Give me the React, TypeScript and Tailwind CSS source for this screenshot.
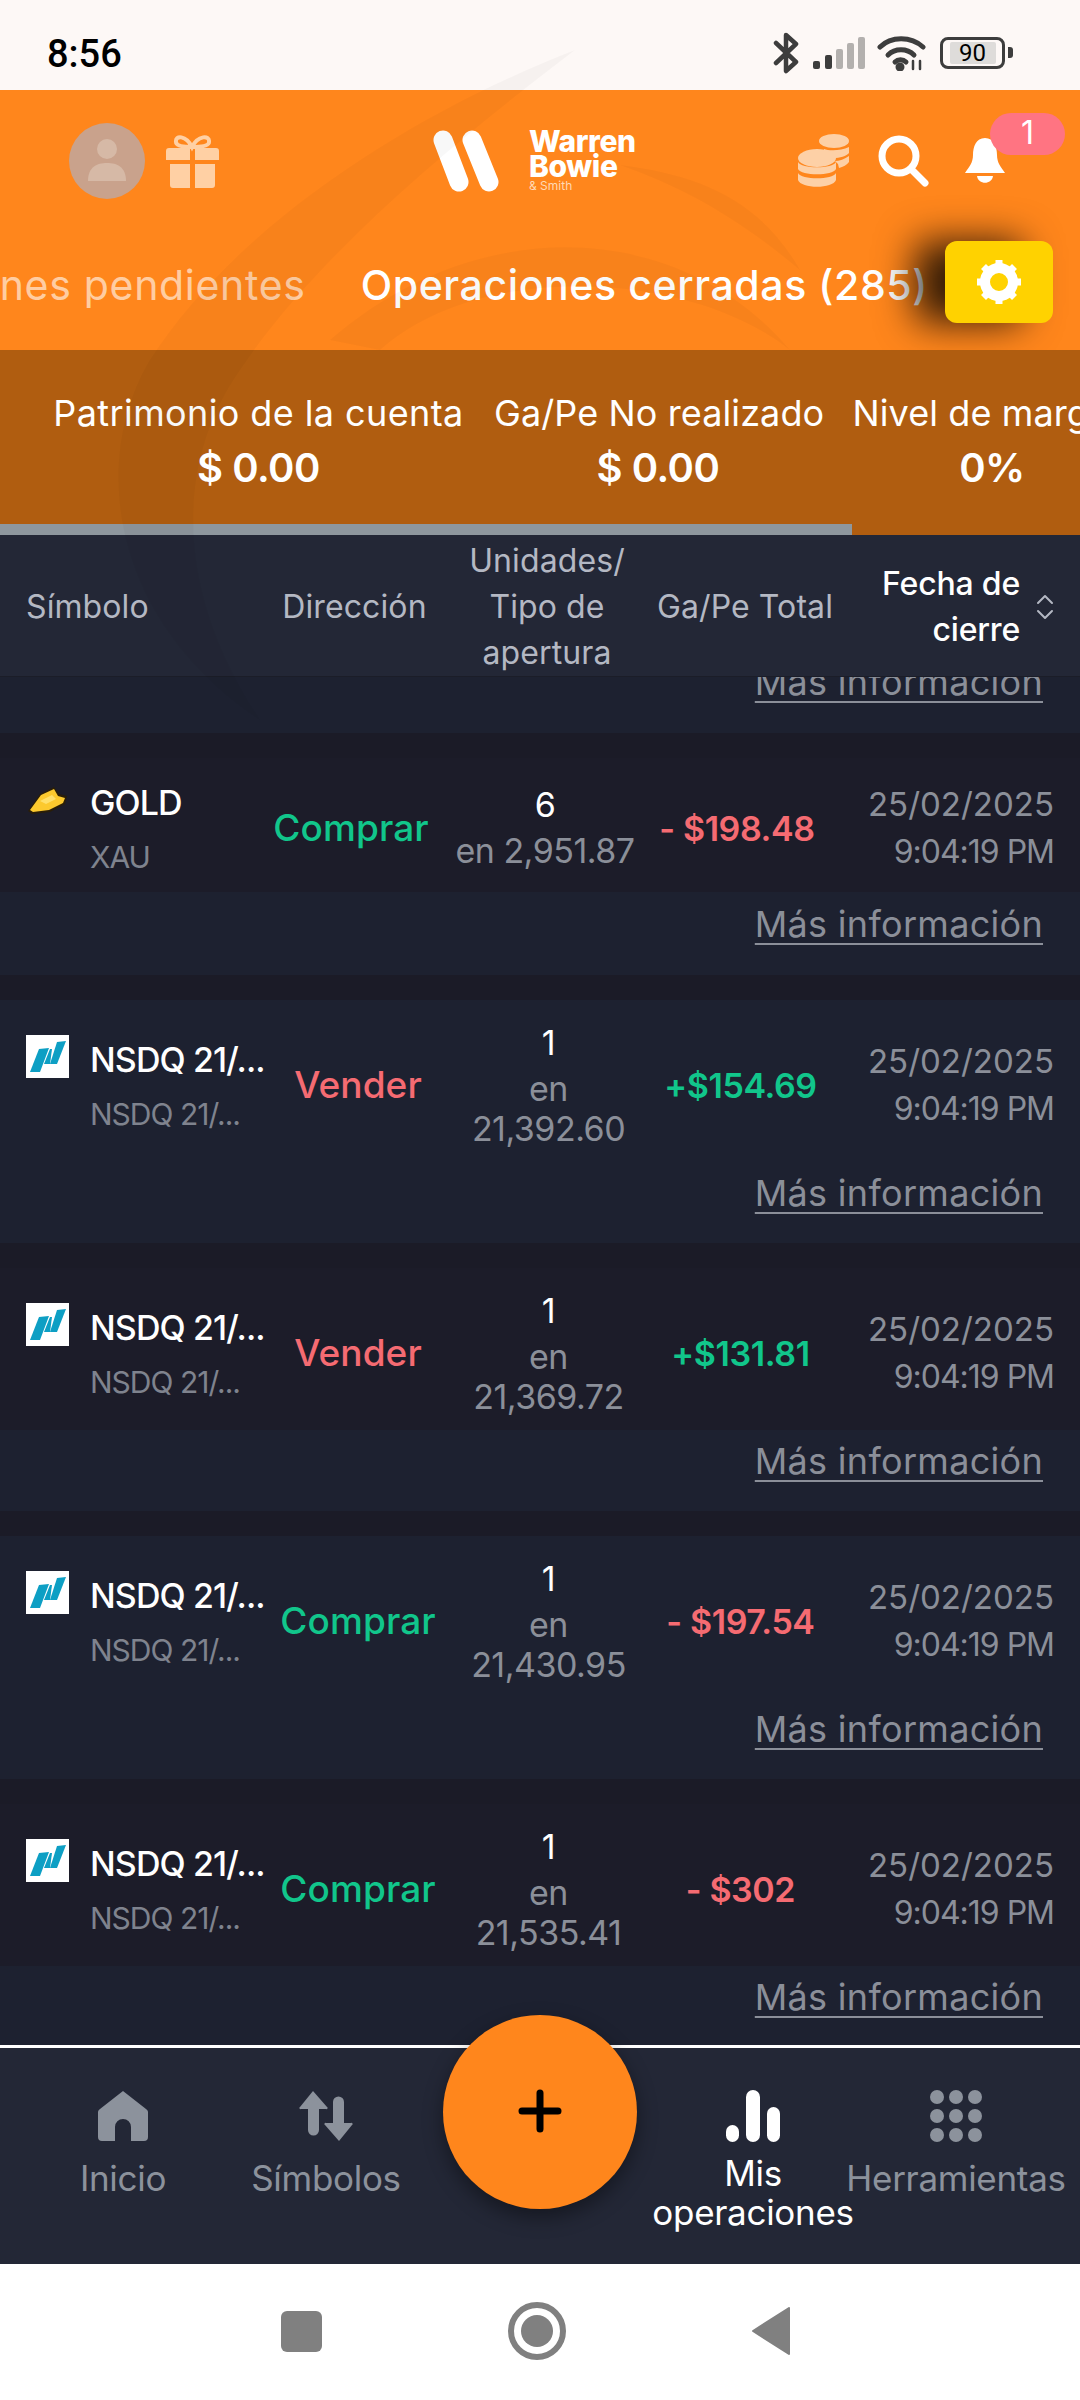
import React from 'react';

interface Trade {
  icon: 'gold' | 'nsdq';
  name: string;
  sub: string;
  side: 'Comprar' | 'Vender';
  units: string;
  price: string[];
  pnl: string;
  pnlUp: boolean;
}

const trades: Trade[] = [
  { icon: 'gold', name: 'GOLD', sub: 'XAU', side: 'Comprar', units: '6', price: ['en 2,951.87'], pnl: '- $198.48', pnlUp: false },
  { icon: 'nsdq', name: 'NSDQ 21/...', sub: 'NSDQ 21/...', side: 'Vender', units: '1', price: ['en', '21,392.60'], pnl: '+$154.69', pnlUp: true },
  { icon: 'nsdq', name: 'NSDQ 21/...', sub: 'NSDQ 21/...', side: 'Vender', units: '1', price: ['en', '21,369.72'], pnl: '+$131.81', pnlUp: true },
  { icon: 'nsdq', name: 'NSDQ 21/...', sub: 'NSDQ 21/...', side: 'Comprar', units: '1', price: ['en', '21,430.95'], pnl: '- $197.54', pnlUp: false },
  { icon: 'nsdq', name: 'NSDQ 21/...', sub: 'NSDQ 21/...', side: 'Comprar', units: '1', price: ['en', '21,535.41'], pnl: '- $302', pnlUp: false },
];

const GoldIcon = () => (
  <svg width="43" height="30" viewBox="0 0 43 30">
    <path d="M2 25 L14 8 L28 1 L33 8 L41 10 L39 18 L24 26 L6 28 Z" fill="#2a1e08" />
    <path d="M4 24 L15 9 L28 3 L32 10 L39 12 L37 17 L23 24 L7 26 Z" fill="#fcc92e" />
    <path d="M14 15 L26 9 L30 13 L20 18 Z" fill="#ffe06a" />
  </svg>
);

const NsdqIcon = () => (
  <svg width="43" height="43" viewBox="0 0 43 43" className="bg-white">
    <polygon points="4,37 13,14 23,13 14,37" fill="#0d9fc4" />
    <polygon points="18,29 24,14 26,14 24,29" fill="#0d9fc4" />
    <polygon points="24,29 31,7 40,6 31,29" fill="#0d9fc4" />
  </svg>
);

const MoreInfo = () => (
  <span className="text-[36px] leading-[42px] tracking-[0.3px] text-[#8b8f99] underline underline-offset-[6px] decoration-[2px]">Más información</span>
);

const TradeRow = ({ t, idx }: { t: Trade; idx: number }) => {
  const first = idx === 0;
  const dark = idx % 2 === 0;
  return (
    <div>
      <div className="h-[25px] bg-[#1b1b27]" />
      <div className={`${first ? 'h-[134px] pt-[6px]' : 'h-[162px] pt-[8px]'} ${dark ? 'bg-[#1c1c29]' : 'bg-[#1d2130]'}`}>
        <div className={`h-full grid items-center ${first ? 'grid-cols-[262px_178px_210px_174px_1fr]' : 'grid-cols-[270px_176px_205px_179px_1fr]'}`}>
          <div className="flex gap-[21px] pl-[26px] mt-[4px]">
            <div className={`shrink-0 ${first ? 'mt-[10px]' : 'mt-[2px]'}`}>
              {t.icon === 'gold' ? <GoldIcon /> : <NsdqIcon />}
            </div>
            <div className="whitespace-nowrap">
              <div className="text-[34px] leading-[54px] font-medium tracking-[-0.9px] text-white">{t.name}</div>
              <div className="text-[30px] leading-[54px] tracking-[-1px] text-[#7f838e]">{t.sub}</div>
            </div>
          </div>
          <div className={`text-center text-[37px] font-medium tracking-[0.1px] ${t.side === 'Comprar' ? 'text-[#11c68b]' : 'text-[#f56b72]'}`}>{t.side}</div>
          <div className={`text-center text-[34px] text-[#8b8f99] tracking-[-0.5px] ${first ? '' : '-mt-[5px]'}`}>
            <div className="leading-[46px] text-white">{t.units}</div>
            {t.price.map((p, i) => (
              <div key={i} className={`whitespace-nowrap ${i === 0 ? 'leading-[46px]' : 'leading-[34px]'}`}>{p}</div>
            ))}
          </div>
          <div className={`text-center whitespace-nowrap text-[34px] font-semibold tracking-[-0.4px] ${t.pnlUp ? 'text-[#11c68b]' : 'text-[#f56b72]'}`}>{t.pnl}</div>
          <div className="text-right pr-[26px] leading-[48px] text-[#8b8f99] whitespace-nowrap">
            <div className="text-[33px]">25/02/2025</div>
            <div className="text-[32px] tracking-[-1px]">9:04:19 PM</div>
          </div>
        </div>
      </div>
      <div className={`${first ? 'h-[83px] pt-[11px]' : 'h-[81px] pt-[10px]'} bg-[#1d2130] pr-[37px] text-right`}>
        <MoreInfo />
      </div>
    </div>
  );
};

const NavItem = ({ label, active, width, children }: { label: React.ReactNode; active?: boolean; width: string; children: React.ReactNode }) => (
  <div className={`${width} shrink-0 flex flex-col items-center ${active ? 'text-white' : 'text-[#8c929c]'}`}>
    <div className="h-[53px] flex items-center justify-center">{children}</div>
    {label}
  </div>
);

export default function App() {
  return (
    <div className="relative w-[1080px] h-[2400px] overflow-hidden flex flex-col bg-white font-['Inter','Noto_Sans',sans-serif]">
      {/* status bar */}
      <div className="h-[90px] shrink-0 bg-[#fdf8f6] flex items-center pl-[47px] pr-[67px] pt-[18px]">
        <span className="font-['Roboto',sans-serif] font-medium text-[38px] text-black">8:56</span>
        <div className="ml-auto flex items-center -mt-[3px]">
          <svg width="26" height="42" viewBox="0 0 26 42" fill="none" stroke="#3d3d3d" strokeWidth="4.5" strokeLinejoin="round" strokeLinecap="round">
            <path d="M3 11 L23 30 L13 39 L13 3 L23 12 L3 31" />
          </svg>
          <svg width="52" height="34" viewBox="0 0 52 34" className="ml-[14px]" fill="#b3b0ae">
            <rect x="0" y="25" width="7" height="8" rx="2" fill="#3d3d3d" />
            <rect x="12" y="19" width="7" height="14" rx="2" fill="#3d3d3d" />
            <rect x="23" y="13" width="7" height="20" rx="2" />
            <rect x="34" y="7" width="7" height="26" rx="2" />
            <rect x="45" y="1" width="7" height="32" rx="2" />
          </svg>
          <svg width="50" height="36" viewBox="0 0 50 36" className="ml-[12px]" fill="none" stroke="#3d3d3d" strokeWidth="5" strokeLinecap="round">
            <path d="M3 12 C14 1 34 1 46 12" />
            <path d="M11 20 C18 13 30 13 37 20" />
            <path d="M18 27 C21 24 26 24 29 27" />
            <circle cx="23" cy="32" r="2" fill="#3d3d3d" />
            <path d="M36 26 v8 M43 26 v8" strokeWidth="2.5" />
          </svg>
          <div className="ml-[13px] w-[65px] h-[32px] rounded-[8px] border-[3px] border-[#3d3d3d] flex items-center justify-center">
            <div className="w-[46px] h-[22px] bg-[#dedcda] rounded-[2px] text-center text-[24px] leading-[22px] text-black font-['Roboto',sans-serif]">90</div>
          </div>
          <div className="ml-[3px] w-[5px] h-[11px] rounded-r-[3px] bg-[#3d3d3d]" />
        </div>
      </div>

      {/* header */}
      <div className="relative h-[260px] shrink-0 bg-[#ff861c]">
        <div className="h-[140px] flex items-center pt-[2px]">
          <div className="ml-[69px] w-[76px] h-[76px] rounded-full bg-[#c9a28c] flex items-center justify-center">
            <svg width="44" height="48" viewBox="0 0 44 48" fill="#d6b9a6">
              <circle cx="22" cy="12" r="10" />
              <path d="M3 44 C3 30 12 26 22 26 C32 26 41 30 41 44 Z" />
            </svg>
          </div>
          <svg width="53" height="53" viewBox="0 0 53 53" className="ml-[21px]" fill="#ffd0a4">
            <path d="M0 16 a3 3 0 0 1 3 -3 h21 v12 h-24 Z M29 13 h21 a3 3 0 0 1 3 3 v9 h-24 Z" />
            <path d="M4 29 h20 v24 h-17 a3 3 0 0 1 -3 -3 Z M29 29 h20 v21 a3 3 0 0 1 -3 3 h-17 Z" />
            <path d="M26 12 C20 0 9 0 10 7 C10 11 17 12 26 12 C35 12 43 11 43 7 C44 0 32 0 26 12 Z" fill="none" stroke="#ffd0a4" strokeWidth="4" />
          </svg>
          <div className="ml-[214px] flex items-center">
            <svg width="66" height="62" viewBox="0 0 66 62" stroke="#fff" strokeWidth="19" strokeLinecap="round">
              <path d="M10 10 L26 52" />
              <path d="M39 10 L56 52" />
            </svg>
            <div className="ml-[30px] w-[112px] font-['Inter',sans-serif] font-extrabold text-white text-[30px] leading-[25px] tracking-[-0.4px]">
              <div>Warren</div>
              <div>Bowie</div>
              <div className="text-[12px] leading-[14px] font-normal tracking-normal text-[#ffd9b5]">&amp; Smith</div>
            </div>
          </div>
          <svg width="53" height="54" viewBox="0 0 53 54" className="ml-[156px]" fill="#fdd0a6">
            <ellipse cx="37" cy="7" rx="15" ry="7" />
            <path d="M27 15 C32 17 44 17 52 13 V19 C50 22 42 24 37 24 L27 18 Z M38 27 C42 27 48 25 52 22 V28 C50 31 46 33 42 34 L41 30 Z" />
            <ellipse cx="20" cy="24" rx="19" ry="9" />
            <path d="M1 28 C4 35 36 35 39 28 V35 C36 42 4 42 1 35 Z" />
            <path d="M1 39 C4 46 36 46 39 39 V46 C36 55 4 55 1 46 Z" />
          </svg>
          <svg width="52" height="52" viewBox="0 0 52 52" className="ml-[27px]" fill="none" stroke="#fff" strokeWidth="7" strokeLinecap="round">
            <circle cx="22" cy="21" r="17" />
            <path d="M34 34 L48 48" />
          </svg>
          <svg width="42" height="48" viewBox="0 0 42 48" className="ml-[35px]" fill="#fff">
            <path d="M21 1 C30 1 33 10 33 18 C33 26 37 30 41 36 H1 C5 30 9 26 9 18 C9 10 12 1 21 1 Z" />
            <path d="M13 39 H29 C28 48 14 48 13 39 Z" />
          </svg>
        </div>
        {/* notification badge */}
        <div className="absolute left-[990px] top-[23px] w-[75px] h-[42px] rounded-full bg-[#ff7482] text-center text-[32px] leading-[40px] text-white">1</div>

        {/* tabs */}
        <div className="h-[120px] flex items-center justify-end gap-[55px] pr-[152px] pb-[8px] overflow-hidden whitespace-nowrap">
          <span className="shrink-0 text-[41px] font-normal tracking-[0.7px] text-white/60">Operaciones pendientes</span>
          <span className="shrink-0 text-[41px] font-medium tracking-[0.6px] text-white">Operaciones cerradas (285)</span>
        </div>
        <div className="absolute left-[945px] top-[151px] w-[108px] h-[82px] rounded-[12px] bg-[#ffd200] flex items-center justify-center shadow-[-30px_0_38px_rgba(0,0,0,0.8)]">
          <svg width="46" height="46" viewBox="0 0 46 46" fill="none" stroke="#fff" strokeWidth="10">
            <circle cx="23" cy="23" r="14" />
            <path d="M23 1 v6 M23 39 v6 M1 23 h6 M39 23 h6 M7.5 7.5 l4 4 M34.5 34.5 l4 4 M38.5 7.5 l-4 4 M11.5 34.5 l-4 4" strokeWidth="7" />
          </svg>
        </div>
      </div>

      {/* account stats */}
      <div className="relative h-[185px] shrink-0 bg-[#b05d10] overflow-hidden">
        <div className="flex text-white whitespace-nowrap pt-[38px]">
          <div className="ml-[53px] w-[411px] shrink-0 text-center">
            <div className="text-[36px] leading-[50px] tracking-[0.4px]">Patrimonio de la cuenta</div>
            <div className="text-[40px] leading-[60px] font-semibold tracking-[-0.5px]">$ 0.00</div>
          </div>
          <div className="ml-[30px] w-[328px] shrink-0 text-center">
            <div className="text-[36px] leading-[50px] tracking-[0.1px]">Ga/Pe No realizado</div>
            <div className="text-[40px] leading-[60px] font-semibold tracking-[-0.5px]">$ 0.00</div>
          </div>
          <div className="ml-[30px] w-[280px] shrink-0 text-center">
            <div className="text-[36px] leading-[50px] tracking-[0.1px]">Nivel de margen</div>
            <div className="text-[40px] leading-[60px] font-semibold tracking-[-0.5px]">0%</div>
          </div>
        </div>
        <div className="absolute left-0 bottom-0 w-[852px] h-[11px] bg-[#8e979e]" />
      </div>

      {/* table header */}
      <div className="h-[142px] shrink-0 pt-[2px] bg-[#232736] grid grid-cols-[270px_170px_214px_182px_1fr] items-center text-[32px] leading-[46px] tracking-[0.1px] text-[#b4b8c3] border-b border-[#1b1d28]">
        <div className="pl-[26px]">Símbolo</div>
        <div className="text-center -ml-[1px]">Dirección</div>
        <div className="text-center">Unidades/<br />Tipo de<br />apertura</div>
        <div className="text-center whitespace-nowrap">Ga/Pe Total</div>
        <div className="flex items-center justify-end pr-[26px] text-white font-medium tracking-[-0.2px]">
          <div className="text-right">Fecha de<br />cierre</div>
          <svg width="18" height="26" viewBox="0 0 18 26" className="ml-[16px] shrink-0" fill="none" stroke="#b4b8c3" strokeWidth="2" strokeLinecap="round" strokeLinejoin="round">
            <path d="M2 9 L9 2 L16 9 M2 17 L9 24 L16 17" />
          </svg>
        </div>
      </div>

      {/* trade list */}
      <div className="flex-1 min-h-0 overflow-hidden bg-[#1d2130]">
        <div className="h-[56px] flex justify-end items-end pb-[30px] pr-[37px]">
          <MoreInfo />
        </div>
        {trades.map((t, i) => (
          <TradeRow key={i} t={t} idx={i} />
        ))}
      </div>

      {/* bottom nav */}
      <div className="h-[219px] shrink-0 bg-[#232736] border-t-[3px] border-white flex pt-[41px] text-[35px] tracking-[-0.3px]">
        <NavItem width="w-[246px]" label={<span className="mt-[12px] leading-[48px]">Inicio</span>}>
          <svg width="50" height="52" viewBox="0 0 50 52" fill="#8c929c">
            <path d="M25 1 L48 19 a4 4 0 0 1 2 4 V47 a4 4 0 0 1 -4 4 H33 V37 a8 8 0 0 0 -16 0 V51 H4 a4 4 0 0 1 -4 -4 V23 a4 4 0 0 1 2 -4 Z" />
          </svg>
        </NavItem>
        <NavItem width="w-[160px]" label={<span className="mt-[12px] leading-[48px]">Símbolos</span>}>
          <svg width="54" height="52" viewBox="0 0 54 52" fill="#8c929c">
            <path d="M14 1 L28 17 a1 1 0 0 1 -1 2 H20 V40 a5 5 0 0 1 -11 0 V19 H2 a1 1 0 0 1 -1 -2 Z" />
            <path d="M40 51 L26 35 a1 1 0 0 1 1 -2 H34 V12 a5 5 0 0 1 11 0 V33 H52 a1 1 0 0 1 1 2 Z" />
          </svg>
        </NavItem>
        <div className="w-[240px] shrink-0" />
        <NavItem width="w-[214px]" active label={<span className="mt-[12px] leading-[39px] text-center whitespace-nowrap">Mis<br />operaciones</span>}>
          <svg width="54" height="52" viewBox="0 0 54 52" fill="#fff">
            <rect x="0" y="35" width="13" height="17" rx="6.5" />
            <rect x="20" y="0" width="14" height="52" rx="7" />
            <rect x="41" y="17" width="13" height="35" rx="6.5" />
          </svg>
        </NavItem>
        <NavItem width="w-[192px]" label={<span className="mt-[12px] leading-[48px] whitespace-nowrap">Herramientas</span>}>
          <svg width="52" height="52" viewBox="0 0 52 52" fill="#8c929c">
            {[7, 26, 45].map(y => [7, 26, 45].map(x => <circle key={`${x}-${y}`} cx={x} cy={y} r="7" />))}
          </svg>
        </NavItem>
      </div>

      {/* system nav */}
      <div className="h-[136px] shrink-0 bg-white flex items-center pb-[2px]">
        <div className="ml-[281px] w-[41px] h-[41px] rounded-[6px] bg-[#808080]" />
        <div className="ml-[186px] w-[58px] h-[58px] rounded-full border-[6px] border-[#808080] flex items-center justify-center">
          <div className="w-[32px] h-[32px] rounded-full bg-[#808080]" />
        </div>
        <svg width="38" height="48" viewBox="0 0 38 48" className="ml-[186px]" fill="#808080">
          <path d="M37 1 V47 L1 24 Z" stroke="#808080" strokeLinejoin="round" strokeWidth="2" />
        </svg>
      </div>

      {/* floating add button */}
      <div className="absolute left-[443px] top-[2015px] w-[194px] h-[194px] rounded-full bg-[#ff861c] flex items-center justify-center shadow-[0_8px_20px_rgba(0,0,0,0.4)]">
        <svg width="44" height="44" viewBox="0 0 44 44" className="-mt-[3px]" stroke="#000" strokeWidth="7" strokeLinecap="round">
          <path d="M22 4 V40 M4 22 H40" />
        </svg>
      </div>

      {/* faint background swirl of the app shows through */}
      <svg className="absolute left-0 top-0 pointer-events-none" width="1080" height="800" viewBox="0 0 1080 800" fill="#000" fillOpacity="0.028">
        <path d="M575 50 C420 110 240 220 150 360 C90 460 110 620 260 720 C180 600 170 470 240 370 C320 250 470 130 575 50 Z" />
        <path d="M330 340 C480 210 680 220 790 350 C690 270 480 260 380 350 Z" />
        <path d="M620 165 C700 175 760 200 800 270 C740 220 690 190 620 165 Z" />
      </svg>
    </div>
  );
}
